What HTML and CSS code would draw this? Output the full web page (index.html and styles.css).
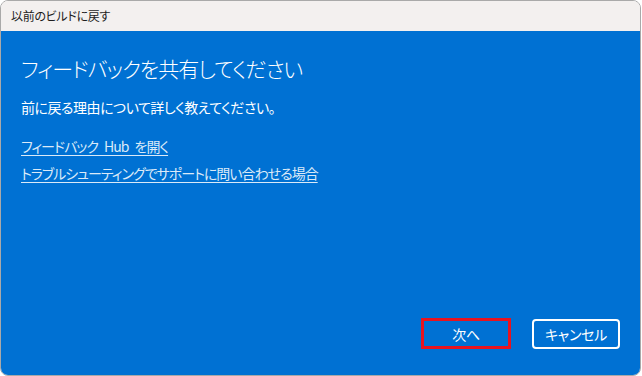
FILE: index.html
```html
<!DOCTYPE html>
<html>
<head>
  <title>以前のビルドに戻す</title>
  <meta charset='utf-8'>
  <link rel="stylesheet" href="styles.css">
</head>
<body>
  <div class='window'>
    <div class='titlebar'>以前のビルドに戻す</div>
    <div class='content'>
      <div class='main'>
        <h1>フィードバックを共有してください</h1>
        <p class='lead'>前に戻る理由について詳しく教えてください。</p>
        <div class='links'>
          <a href='#'>フィードバック Hub を開く</a>
          <a href='#'>トラブルシューティングでサポートに問い合わせる場合</a>
        </div>
      </div>
      <div class='footer'>
        <button class='btn btn-next'>次へ</button>
        <button class='btn btn-cancel'>キャンセル</button>
      </div>
    </div>
  </div>
</body>
</html>
```

FILE: styles.css
```css
body {
  margin: 0;
  background-color: #ffffff;
  font-family: "Noto Sans CJK JP", "Noto Sans", sans-serif;
  font-feature-settings: "palt";
}
.window {
  box-sizing: border-box;
  width: 641px;
  height: 376px;
  border: 1px solid #a9a9a9;
  border-radius: 8px;
  overflow: hidden;
  display: flex;
  flex-direction: column;
}
.titlebar {
  height: 30px;
  background-color: #f3f0ef;
  color: #1c1c1c;
  font-size: 12px;
  line-height: 30px;
  padding-left: 10px;
  letter-spacing: -0.3px;
}
.content {
  flex: 1;
  background-color: #0071d3;
  color: #ffffff;
  display: flex;
  flex-direction: column;
  justify-content: space-between;
  padding: 0 20px 26px 20px;
}
h1 {
  font-size: 21px;
  font-weight: 300;
  letter-spacing: -1px;
  margin: 21px 0 0 0;
  line-height: 32px;
}
.lead {
  font-size: 14px;
  letter-spacing: -0.5px;
  margin: 13px 0 0 0;
  line-height: 20px;
}
.links {
  display: flex;
  flex-direction: column;
  align-items: flex-start;
  margin-top: 19px;
  gap: 7px;
}
.links a {
  color: #dbeaf8;
  font-size: 14px;
  letter-spacing: -1px;
  word-spacing: 4px;
  line-height: 20px;
  text-decoration: underline;
  text-underline-offset: 3px;
}
.footer {
  display: flex;
  justify-content: flex-end;
  gap: 21px;
}
.btn {
  box-sizing: border-box;
  width: 89px;
  height: 31px;
  background: transparent;
  color: #ffffff;
  font-family: inherit;
  font-feature-settings: "palt";
  font-size: 14px;
  letter-spacing: -0.3px;
  padding: 0;
}
.btn-next {
  border: 3px solid #e8131f;
  width: 90px;
}
.btn-cancel {
  border: 2px solid #ffffff;
  border-radius: 4px;
  width: 88px;
  height: 30px;
  margin-top: 1px;
}
```
